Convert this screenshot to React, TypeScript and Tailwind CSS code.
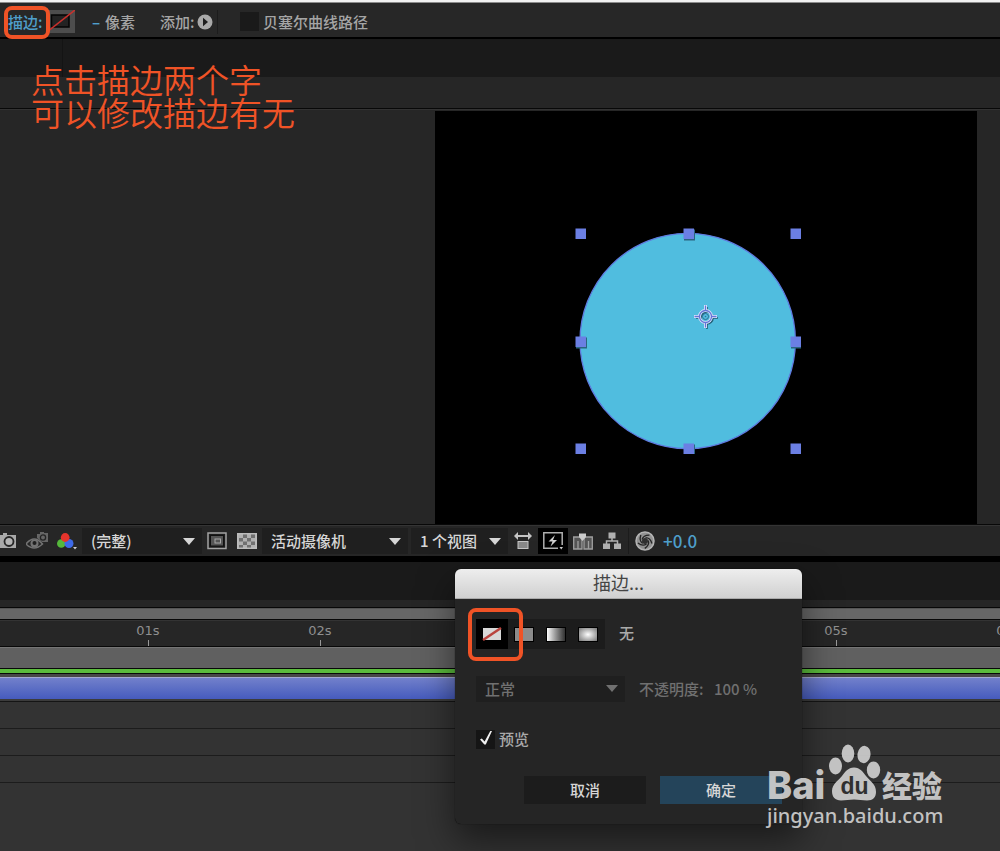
import React from "react";

function Rule({ className = "" }: { className?: string }) {
  return <div className={`h-px shrink-0 bg-[#080808] ${className}`} />;
}

function Caret({ className = "" }: { className?: string }) {
  return (
    <svg className={`pointer-events-none absolute h-[7px] w-3 ${className}`} viewBox="0 0 12 7" aria-hidden="true">
      <path d="M0 0H12L6 7Z" fill="currentColor" />
    </svg>
  );
}

function BarSelect({ label, value, className }: { label: string; value: string; className: string }) {
  return (
    <div className={`relative h-[26px] shrink-0 bg-[#1f1f1f] text-[#d6d6d6] ${className}`}>
      <select
        aria-label={label}
        defaultValue={value}
        className="h-full w-full appearance-none bg-transparent pl-[9px] text-[15px] font-medium leading-[26px] outline-none"
      >
        <option>{value}</option>
      </select>
      <Caret className="right-[7px] top-[10px]" />
    </div>
  );
}

function IconButton({ label, className = "", children }: { label: string; className?: string; children: React.ReactNode }) {
  return (
    <button type="button" aria-label={label} className={`flex h-[26px] shrink-0 items-center justify-center ${className}`}>
      {children}
    </button>
  );
}

function TopToolbar() {
  return (
    <div className="relative flex h-[34px] shrink-0 items-center bg-[#272727] pl-2 pt-[3px] text-[15px] font-medium leading-5 text-[#a5a5a5]">
      <button type="button" className="w-[39px] text-left text-[#4f9fcb]">描边:</button>
      <button type="button" aria-label="描边颜色" className="h-[23px] w-7">
        <svg width="28" height="23" viewBox="0 0 28 23">
          <rect width="28" height="23" fill="#4d4d4d" />
          <rect x="4.500" y="5" width="17.500" height="12" fill="#232323" stroke="#050505" strokeWidth="1.500" />
          <path d="M0 22L28 0" stroke="#c9302c" strokeWidth="1.500" />
        </svg>
      </button>
      <button type="button" className="ml-[17px] w-[13px] text-left font-bold text-[#4f9fcb]">–</button>
      <span className="w-[55px]">像素</span>
      <span className="w-[37px]">添加:</span>
      <button type="button" aria-label="添加" className="h-4 w-4">
        <svg width="16" height="16" viewBox="0 0 16 16">
          <circle cx="8" cy="8" r="7.500" fill="#a9a9a9" />
          <path d="M6 3.800V12.200L11 8Z" fill="#1d1d1d" />
        </svg>
      </button>
      <div className="ml-1 h-6 w-px bg-[#1c1c1c]" />
      <label className="ml-[22px] flex items-center gap-1">
        <input type="checkbox" className="h-[19px] w-[19px] appearance-none bg-[#1a1a1a]" />
        贝塞尔曲线路径
      </label>
      <div className="pointer-events-none absolute left-1 top-[3px] h-[33px] w-[46px] rounded-[8px] border-4 border-[#f05326]" />
    </div>
  );
}

function Composition() {
  const handles = [
    [5.5, 5.5], [113.5, 5.5], [220.5, 5.5], [5.5, 113.5], [220.5, 113.5], [5.5, 220.5], [113.5, 220.5], [220.5, 220.5],
  ];
  return (
    <div className="grid h-[414px] shrink-0 grid-cols-[435fr_542fr_23fr] bg-[#262626] pt-px">
      <div />
      <div className="relative bg-black">
        <svg className="absolute left-[140px] top-[117px]" width="226" height="226" viewBox="0 0 226 226" aria-hidden="true">
          <circle cx="112.700" cy="113" r="107.700" fill="#50bddf" stroke="#5f7be0" strokeWidth="1.300" />
          {handles.map(([x, y]) => (
            <g key={`${x}-${y}`}>
              {(x === 113.5 || y === 113.5) && <rect x={x - 4.5} y={y - 4} width="11" height="11" fill="#2b6480" />}
              <rect x={x - 5} y={y - 5} width="10.500" height="10.500" fill="#6b7fe3" />
            </g>
          ))}
          <g fill="none" transform="translate(130.500 88.500)">
            <g stroke="#245f78" strokeWidth="1.600" transform="translate(1.500 1.500)">
              <circle r="6" />
              <path d="M0-11V-6M0 6V11M-11 0H-6M6 0H11" />
            </g>
            <g stroke="#dfe6fb" strokeWidth="3">
              <circle r="6" />
              <path d="M0-11.500V-6M0 6V11.500M-11.500 0H-6M6 0H11.500" />
            </g>
            <g stroke="#6577d8" strokeWidth="1.300">
              <circle r="6" />
              <path d="M0-11V-6M0 6V11M-11 0H-6M6 0H11" />
            </g>
            <circle r="3" stroke="#2d6e92" />
            <circle r="0.800" fill="#3a6f99" />
          </g>
        </svg>
      </div>
      <div />
    </div>
  );
}

function ViewerBar() {
  return (
    <div className="flex h-[31px] shrink-0 items-center border-t border-[#343434] bg-[#262626] text-[15px] font-medium">
      <IconButton label="拍摄快照" className="w-[17px]">
        <svg width="17" height="16" viewBox="0 0 17 16">
          <path d="M0 2H3V0H7V2H16V15H0Z" fill="#a9a9a9" />
          <circle cx="9" cy="8.500" r="4.500" fill="#b5b5b5" stroke="#262626" strokeWidth="1.800" />
        </svg>
      </IconButton>
      <IconButton label="显示快照" className="ml-[9px] w-[22px]">
        <svg width="22" height="19" viewBox="0 0 22 19">
          <path d="M11 2H14V0H18V1H22V10H16L11 6Z" fill="#666" />
          <circle cx="17" cy="5.500" r="2.600" fill="#666" stroke="#252525" strokeWidth="1.300" />
          <path d="M0 12Q8 2 16.500 12Q8 20 0 12Z" fill="#272727" stroke="#737373" strokeWidth="1.500" />
          <circle cx="8.500" cy="11.500" r="4" fill="#737373" />
          <circle cx="8.500" cy="11" r="2" fill="#202020" />
        </svg>
      </IconButton>
      <IconButton label="通道" className="ml-[9px] w-[21px]">
        <svg width="21" height="17" viewBox="0 0 21 17">
          <circle cx="4.300" cy="10.500" r="4.300" fill="#55b83b" />
          <circle cx="12" cy="10.500" r="4.500" fill="#3e6ae8" />
          <circle cx="8.200" cy="4.500" r="4.400" fill="#e5342c" />
          <path d="M16 14H20L18 16.500Z" fill="#ccc" />
        </svg>
      </IconButton>
      <BarSelect label="分辨率" value="(完整)" className="ml-1 w-[120px]" />
      <IconButton label="目标区域" className="ml-[5px] w-5">
        <svg width="20" height="18" viewBox="0 0 20 18">
          <rect x="1" y="1" width="18" height="15.500" fill="#1c1c1c" stroke="#a4a4a4" strokeWidth="1.500" />
          <rect x="3.500" y="3.500" width="13" height="10.500" fill="#555" stroke="#111" />
          <rect x="8" y="7" width="5.500" height="4" fill="#555" stroke="#a8a8a8" />
        </svg>
      </IconButton>
      <IconButton label="透明网格" className="ml-[10px] w-5">
        <svg width="20" height="16" viewBox="0 0 20 16">
          <rect x="0.800" y="0.800" width="18.400" height="14.400" fill="#b0b0b0" stroke="#bcbcbc" strokeWidth="1.600" />
          <path d="M6 1.500H10V5H6ZM14 1.500H18V5H14ZM2 5H6V8.500H2ZM10 5H14V8.500H10ZM6 8.500H10V12H6ZM14 8.500H18V12H14ZM2 12H6V14.500H2ZM10 12H14V14.500H10Z" fill="#707070" />
        </svg>
      </IconButton>
      <BarSelect label="3D 视图" value="活动摄像机" className="ml-[5px] w-[146px]" />
      <BarSelect label="视图布局" value="1 个视图" className="ml-[3px] w-[97px]" />
      <IconButton label="像素长宽比校正" className="ml-[6px] w-[18px]">
        <svg width="18" height="18" viewBox="0 0 18 18" fill="#c5c5c5">
          <path d="M0 4L4 0V3H14V0L18 4L14 8V5H4V8Z" />
          <rect x="4" y="9.500" width="10" height="7" fill="#888" stroke="#c5c5c5" />
        </svg>
      </IconButton>
      <IconButton label="快速预览" className="ml-[6px] w-[30px] bg-black">
        <svg width="20" height="18" viewBox="0 0 20 18">
          <path d="M15 16.200H0.800V0.800H19.200V13" fill="none" stroke="#b0b0b0" strokeWidth="1.500" />
          <path d="M12 3L5.500 9.500H9.500L7.500 14.500L14 8H10Z" fill="#d0d0d0" />
          <path d="M16.500 15H20L18.200 17.500Z" fill="#ccc" />
        </svg>
      </IconButton>
      <IconButton label="时间轴" className="ml-[5px] w-5">
        <svg width="20" height="17" viewBox="0 0 20 17">
          <path d="M.7 16V4H19.300V16H15.500V8V16H11V4H9V16H5V8V16Z" fill="#555" stroke="#a0a0a0" strokeWidth="1.300" />
          <path d="M6 0.500H13V4L9.500 8L6 4Z" fill="#ccc" />
        </svg>
      </IconButton>
      <IconButton label="合成流程图" className="ml-[10px] w-[18px]">
        <svg width="18" height="18" viewBox="0 0 18 18">
          <path d="M9 6V9M3.500 12V9H14.500V12" fill="none" stroke="#b0b0b0" strokeWidth="1.500" />
          <path d="M5.500 0.500H12.500V6.500H5.500ZM0 11.500H7V17H0ZM11 11.500H18V17H11Z" fill="#b0b0b0" />
        </svg>
      </IconButton>
      <div className="ml-[7px] h-[26px] w-px bg-[#1c1c1c]" />
      <IconButton label="重置曝光度" className="ml-[6px] w-5">
        <svg width="20" height="20" viewBox="0 0 20 20">
          <circle cx="10" cy="10" r="9" fill="#929292" stroke="#b5b5b5" strokeWidth="1.500" />
          <g fill="none" stroke="#242424" strokeWidth="1.300">
            {[0, 72, 144, 216, 288].map((angle) => (
              <path key={angle} d="M7 8.500Q8.500 4 14.500 4.200" transform={`rotate(${angle} 10 10)`} />
            ))}
          </g>
          <circle cx="10" cy="10" r="3" fill="#303030" />
        </svg>
      </IconButton>
      <button type="button" className="ml-2 text-[17px] font-medium leading-5 text-[#4f9fcb]">+0.0</button>
    </div>
  );
}

function Ruler() {
  return (
    <div className="flex h-[25px] shrink-0 overflow-hidden bg-[#262626] pl-[62px] font-['DejaVu_Sans'] text-[13px] leading-[20px] text-[#8f8f8f]">
      {["01s", "02s", "03s", "04s", "05s", "06s"].map((time) => (
        <div key={time} className="flex w-[172px] shrink-0 flex-col items-center">
          <span className="h-[19px]">{time}</span>
          <span className="h-[6px] w-px bg-[#999]" />
        </div>
      ))}
    </div>
  );
}

function Timeline() {
  return (
    <section className="flex flex-1 flex-col bg-[#333]">
      <div className="h-[38px] bg-[#1a1a1a]" />
      <div className="h-[7px] bg-[#262626]" />
      <Rule />
      <div className="h-[11px] border-t border-[#555] bg-[#676767]" />
      <Rule className="mb-px" />
      <Ruler />
      <Rule />
      <div className="h-[21px] border-t border-[#757575] bg-[#606060]" />
      <Rule />
      <div className="h-1 bg-[#5bbb3d]" />
      <Rule />
      <div className="h-[3px] bg-[#474747]" />
      <div className="h-[22px] border-t border-[#a5a9cf] bg-linear-to-b from-[#7280cb] to-[#465bbd]" />
      <div className="h-[3px] border-b border-[#151515] bg-[#3c3c3c]" />
      {[1, 2, 3].map((row) => (
        <div key={row} className="h-[27px] border-b border-[#1c1c1c]" />
      ))}
    </section>
  );
}

function StrokeDialog() {
  const swatch = "flex h-[30px] w-8 items-center justify-center";
  return (
    <div
      role="dialog"
      aria-label="描边"
      className="absolute left-[455px] top-[569px] w-[347px] overflow-hidden rounded-[6px] bg-[#252525] text-[15px] font-medium leading-5 text-[#aaa] shadow-[0_16px_36px_rgba(0,0,0,0.5),0_0_1px_#000]"
    >
      <h2 className="h-[30px] border-b border-[#aaa] bg-linear-to-b from-[#eee] to-[#d0d0d0] pr-5 text-center text-[18px] font-normal leading-[26px] text-[#454545]">
        描边...
      </h2>
      <div className="flex flex-col px-[21px] pb-5 pt-5">
        <div className="flex items-center">
          <div className="flex w-[129px] bg-[#1c1c1c]">
            <button type="button" aria-label="无" className={`${swatch} bg-black`}>
              <svg width="20" height="14" viewBox="0 0 20 14">
                <rect x="1" y="1" width="18" height="12" fill="#d8d8d8" />
                <path d="M1 13L19 1" stroke="#b9443e" strokeWidth="2.500" />
              </svg>
            </button>
            <button type="button" aria-label="纯色" className={swatch}>
              <span className="h-[15px] w-5 border border-black bg-[#8c8c8c]" />
            </button>
            <button type="button" aria-label="线性渐变" className={swatch}>
              <span className="h-[15px] w-5 border border-black bg-linear-to-r from-white to-[#333]" />
            </button>
            <button type="button" aria-label="径向渐变" className={swatch}>
              <span className="h-[15px] w-5 border border-black bg-radial from-white to-[#777]" />
            </button>
          </div>
          <span className="-mt-[2px] ml-[14px]">无</span>
        </div>
        <div className="mt-[27px] flex items-center text-[#707070]">
          <div className="relative h-[26px] w-[149px] bg-[#1f1f1f]">
            <select
              aria-label="混合模式"
              defaultValue="正常"
              className="h-full w-full appearance-none bg-transparent pl-[9px] text-[15px] leading-[26px] outline-none"
            >
              <option>正常</option>
            </select>
            <Caret className="right-[7px] top-[9px]" />
          </div>
          <label htmlFor="opacity" className="ml-[14px] w-[75px]">不透明度:</label>
          <input id="opacity" defaultValue="100 %" className="w-12 bg-transparent outline-none" />
        </div>
        <label className="relative mt-[27px] flex h-5 items-center gap-1 self-start text-[#aaa]">
          <input type="checkbox" defaultChecked className="peer h-[19px] w-[19px] appearance-none bg-[#151515]" />
          <svg className="pointer-events-none absolute left-1 top-[2px] hidden peer-checked:block" width="12" height="14" viewBox="0 0 12 14" aria-hidden="true">
            <path d="M0 8.500L1.800 7.500L4.600 10.500L10.300 0H12L5.800 13.500H4.300Z" fill="#eee" />
          </svg>
          预览
        </label>
        <div className="-mr-px mt-[27px] flex justify-end gap-[14px] text-[#d6d6d6]">
          <button type="button" className="h-7 w-[122px] bg-[#1c1c1c]">取消</button>
          <button type="button" className="h-7 w-[122px] bg-[#24445a]">确定</button>
        </div>
      </div>
    </div>
  );
}

function Watermark() {
  return (
    <div className="pointer-events-none absolute left-[767px] top-[742px] text-[#d2d2d2] opacity-90">
      <div className="flex h-[60px] items-end">
        <span className="w-[61px] font-['Inter'] text-[38px] font-extrabold leading-[34px]">Bai</span>
        <div className="relative h-[60px] w-[53px]">
          <svg width="53" height="60" viewBox="0 0 53 60" fill="currentColor" aria-hidden="true">
            <ellipse cx="7.500" cy="24" rx="6.500" ry="8.500" />
            <ellipse cx="20" cy="11.500" rx="6.300" ry="9" />
            <ellipse cx="36" cy="12.500" rx="6.500" ry="8.700" transform="rotate(8 36 12.500)" />
            <ellipse cx="45.500" cy="28" rx="6.700" ry="8.500" />
            <path d="M26 25.500C32 25.500 35 30 38 34C42 39 48 42 48 50C48 55 45 58.500 39 58.500C34 58.500 31 57.500 26 57.500C21 57.500 18 58.500 13 58.500C7 58.500 4 55 4 49C4 42 10 39 14 34C17 30 20 25.500 26 25.500Z" />
          </svg>
          <span className="absolute inset-x-0 bottom-1 text-center font-['Liberation_Sans'] text-[23px] font-bold leading-6 text-[#303030]">du</span>
        </div>
        <span className="ml-px text-[30px] font-black leading-[36px]">经验</span>
      </div>
      <div className="font-['Noto_Sans'] text-[20px] font-medium leading-[28px]">jingyan.baidu.com</div>
    </div>
  );
}

export default function App() {
  return (
    <main className="relative flex min-h-screen flex-col overflow-hidden bg-[#262626] font-['Noto_Sans_CJK_SC',sans-serif]">
      <div className="h-[3px] shrink-0 border-b border-[#8c8c8c] bg-[#f2f2f2]" />
      <TopToolbar />
      <div className="h-[2px] shrink-0 bg-black" />
      <div className="flex h-[38px] shrink-0 bg-[#1a1a1a]">
        <div className="w-[63px] border-r border-[#141414]" />
      </div>
      <div className="h-[31px] shrink-0 bg-[#262626]" />
      <Rule />
      <div className="h-px shrink-0 bg-[#333]" />
      <Composition />
      <Rule />
      <ViewerBar />
      <div className="h-[6px] shrink-0 bg-black" />
      <Timeline />
      <p className="pointer-events-none absolute left-[31px] top-[63px] text-[33px] font-[350] leading-[33px] text-[#f05326]">
        点击描边两个字
        <br />
        可以修改描边有无
      </p>
      <StrokeDialog />
      <div className="pointer-events-none absolute left-[468px] top-[608px] h-[53px] w-[55px] rounded-[8px] border-4 border-[#f05326]" />
      <Watermark />
    </main>
  );
}
